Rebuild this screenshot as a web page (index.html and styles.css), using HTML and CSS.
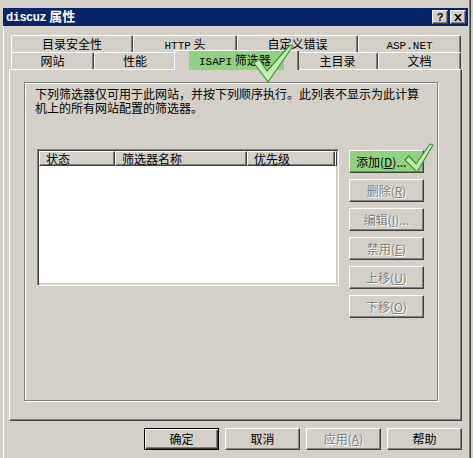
FILE: index.html
```html
<!DOCTYPE html>
<html lang="zh-CN">
<head>
<meta charset="utf-8">
<title>discuz 属性</title>
<link rel="stylesheet" href="styles.css">
</head>
<body>
<div class="window">
  <div class="titlebar">
    <span class="title"><span class="lat">discuz</span> 属性</span>
    <div class="caption-btns">
      <span class="cap-btn help">?</span>
      <span class="cap-btn close"><svg width="8" height="7" viewBox="0 0 8 7"><path d="M0 0 L2 0 L4 2 L6 0 L8 0 L5 3.5 L8 7 L6 7 L4 5 L2 7 L0 7 L3 3.5 Z" fill="#000"/></svg></span>
    </div>
  </div>
  <div class="client">
    <div class="tabs">
      <div class="tabrow back">
        <div class="tab w1">目录安全性</div>
        <div class="tab w2"><span class="lat">HTTP</span> 头</div>
        <div class="tab w3">自定义错误</div>
        <div class="tab w4"><span class="lat">ASP.NET</span></div>
      </div>
      <div class="tabrow front">
        <div class="tab w5">网站</div>
        <div class="tab w6">性能</div>
        <div class="tab sel"><span class="hl"><span class="lat">ISAPI</span> 筛选器</span></div>
        <div class="tab w7">主目录</div>
        <div class="tab w8">文档</div>
      </div>
    </div>
    <div class="panel">
      <div class="group">
        <div class="desc">
          <span class="line">下列筛选器仅可用于此网站，并按下列顺序执行。此列表不显示为此计算</span>
          <span class="line">机上的所有网站配置的筛选器。</span>
        </div>
        <div class="content">
          <div class="list">
            <div class="lhead">
              <span class="col c1">状态</span>
              <span class="col c2">筛选器名称</span>
              <span class="col c3">优先级</span>
              <span class="col c4"></span>
            </div>
            <div class="lbody"></div>
          </div>
          <div class="side">
            <div class="btn green">添加(<u>D</u>)...</div>
            <div class="btn dis">删除(<u>R</u>)</div>
            <div class="btn dis">编辑(<u>I</u>)...</div>
            <div class="btn dis">禁用(<u>E</u>)</div>
            <div class="btn dis">上移(<u>U</u>)</div>
            <div class="btn dis">下移(<u>O</u>)</div>
          </div>
        </div>
      </div>
    </div>
    <div class="footer">
      <div class="btn fbtn default">确定</div>
      <div class="btn fbtn">取消</div>
      <div class="btn fbtn dis">应用(<u>A</u>)</div>
      <div class="btn fbtn">帮助</div>
    </div>
  </div>
  <svg class="check check-tab" width="46" height="42" viewBox="0 0 46 42">
    <path d="M4 21 L9 17 L17 29 L40 3 L43 4 L18 40 Z" fill="#c2efb2" stroke="#3f8f3a" stroke-width="1.2" stroke-linejoin="round"/>
  </svg>
  <svg class="check check-add" width="34" height="34" viewBox="0 0 34 34">
    <path d="M3 20 L7 16 L14 24 L28 4 L31 5 L15 32 Z" fill="#c2efb2" stroke="#3f8f3a" stroke-width="1.2" stroke-linejoin="round"/>
  </svg>
</div>
</body>
</html>
```
FILE: styles.css
```css
* { box-sizing: border-box; }
html, body { margin: 0; padding: 0; }
body {
  width: 473px;
  height: 458px;
  overflow: hidden;
  background: #d4d0c8;
  font-family: "Noto Sans CJK SC", "Liberation Sans", sans-serif;
  font-size: 12px;
  color: #000;
}
.lat { font-family: "Liberation Mono", monospace; font-size: 11px; }

.window {
  position: relative;
  width: 471px;
  height: 458px;
  padding: 8px 0 0 3px;
  display: flex;
  flex-direction: column;
  border-right: 1px solid #404040;
  box-shadow: inset -1px 0 #808080;
}
.titlebar {
  height: 18px;
  width: 465px;
  background: #0a246a;
  color: #fff;
  display: flex;
  align-items: center;
  justify-content: space-between;
  padding: 0 2px 0 3px;
}
.title { font-weight: bold; font-size: 13px; line-height: 18px; }
.title .lat { font-size: 12px; font-weight: bold; letter-spacing: -0.5px; }
.caption-btns { display: flex; gap: 2px; }
.cap-btn {
  width: 16px;
  height: 14px;
  background: #d4d0c8;
  border: 1px solid;
  border-color: #fff #404040 #404040 #fff;
  box-shadow: inset -1px -1px #808080;
  color: #000;
  display: flex;
  align-items: center;
  justify-content: center;
  font-family: "Liberation Sans", sans-serif;
  font-weight: bold;
  font-size: 11px;
  line-height: 12px;
}

.client {
  flex: 1;
  display: flex;
  flex-direction: column;
  border-left: 1px solid #fff;
  padding: 9px 6px 0 5px;
}

.tabs { height: 34px; }
.tabrow { display: flex; height: 17px; padding-left: 2px; }
.tab {
  height: 17px;
  border-top: 1px solid #fff;
  border-left: 1px solid #fff;
  border-right: 1px solid #404040;
  box-shadow: inset -1px 0 #808080;
  border-top-left-radius: 2px;
  border-top-right-radius: 2px;
  text-align: center;
  line-height: 15px;
  white-space: nowrap;
}
.w1 { width: 122px; }
.w2 { width: 104px; }
.w3 { width: 121px; }
.w4 { width: 103px; }
.w5 { width: 83px; }
.w6 { width: 82px; }
.w7 { width: 81px; }
.w8 { width: 83px; }
.tab.sel {
  position: relative;
  z-index: 1;
  width: 125px;
  height: 20px;
  margin: -2px -2px 0 -2px;
  background: #d4d0c8;
  box-shadow: inset -1px 0 #808080;
  text-align: left;
  padding-left: 14px;
}
.hl {
  display: block;
  width: 95px;
  height: 19px;
  background: #90d27f;
  line-height: 18px;
  padding-left: 10px;
}

.panel {
  width: 453px;
  height: 352px;
  border: 1px solid;
  border-color: #fff #404040 #404040 #fff;
  box-shadow: inset -1px -1px #808080;
  padding: 12px 0 0 14px;
}
.group {
  width: 414px;
  height: 319px;
  border: 1px solid #808080;
  box-shadow: inset 1px 1px #fff, 1px 1px #fff;
  padding: 4px 0 0 10px;
}
.desc { display: flex; flex-direction: column; }
.line {
  display: block;
  height: 14px;
  line-height: 14px;
  white-space: nowrap;
}
.content {
  display: flex;
  margin-top: 34px;
  padding-left: 2px;
}
.list {
  width: 302px;
  height: 137px;
  border: 1px solid;
  border-color: #808080 #fff #fff #808080;
  box-shadow: inset 1px 1px #404040, inset -1px -1px #d4d0c8;
  padding: 1px;
  display: flex;
  flex-direction: column;
}
.lhead { display: flex; height: 15px; flex-shrink: 0; }
.col {
  height: 15px;
  border-top: 1px solid #fff;
  border-left: 1px solid #fff;
  border-right: 1px solid #404040;
  border-bottom: 1px solid #404040;
  box-shadow: inset -1px -1px #808080;
  line-height: 13px;
  padding-left: 6px;
  white-space: nowrap;
}
.c1 { width: 76px; }
.c2 { width: 132px; }
.c3 { width: 88px; }
.c4 { flex: 1; padding: 0; }
.lbody { flex: 1; background: #fff; margin-right: 1px; margin-bottom: 1px; }

.side {
  margin-left: 10px;
  margin-top: 1px;
  display: flex;
  flex-direction: column;
  gap: 6px;
}
.btn {
  width: 75px;
  height: 23px;
  background: #d4d0c8;
  border: 1px solid;
  border-color: #fff #404040 #404040 #fff;
  box-shadow: inset -1px -1px #808080;
  display: flex;
  align-items: center;
  justify-content: center;
  white-space: nowrap;
  line-height: 14px;
}
.btn u { text-decoration: underline; }
.btn.green { background: #90d27f; justify-content: flex-start; padding-left: 6px; }
.btn.dis { color: #808080; text-shadow: 1px 1px 0 #fff; }

.footer {
  display: flex;
  justify-content: flex-end;
  gap: 6px;
  padding-top: 7px;
  width: 453px;
}
.fbtn { height: 22px; }
.btn.default {
  border-color: #000;
  box-shadow: inset 1px 1px #fff, inset -1px -1px #404040, inset -2px -2px #808080;
}

.check { position: absolute; z-index: 5; }
.check-tab { left: 250px; top: 42px; }
.check-add { left: 402px; top: 140px; }
```
